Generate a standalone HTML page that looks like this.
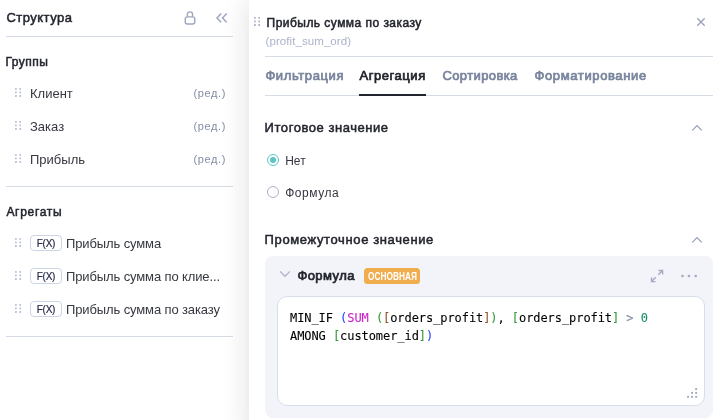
<!DOCTYPE html>
<html lang="ru">
<head>
<meta charset="utf-8">
<title>Структура</title>
<style>
  html, body { margin: 0; padding: 0; }
  body {
    width: 723px; height: 420px; overflow: hidden; position: relative;
    background: #ffffff;
    font-family: "Liberation Sans", sans-serif;
    color: #23252e;
    font-size: 13px;
  }
  #root { position: absolute; left: 0; top: 0; width: 723px; height: 420px; overflow: hidden; will-change: transform; }
  .abs { position: absolute; white-space: nowrap; }
  .t { position: absolute; white-space: nowrap; line-height: 16px; height: 16px; color: #363840; }
  .t.b { color: #23252e; }
  .t.b.grey { color: #78849d; }
  .t.muted { color: #838da6; }
  .b { font-weight: normal; -webkit-text-stroke: 0.5px currentColor; }
  .hr { position: absolute; height: 1px; background: #d5dce8; }
  .left { position: absolute; left: 0; top: 0; width: 249px; height: 420px; background: #fff; }
  .right {
    position: absolute; left: 249px; top: 0; width: 480px; height: 440px; background: #fff;
    box-shadow: 0 0 28px rgba(25, 25, 45, 0.145);
    border-top-left-radius: 2px;
  }
  .grey { color: #75819b; }
  .tab { -webkit-text-stroke-width: 0.7px; }
  .muted { color: #7f8aa3; }
  .dots { position: absolute; width: 6.2px; height: 9px; }
  .badge {
    position: absolute; box-sizing: border-box; width: 32px; height: 16px;
    border: 1px solid #ccd4e6; border-radius: 4px; background: #fff;
    font-size: 10px; line-height: 15px; text-align: center; color: #262c48; letter-spacing: -0.25px; -webkit-text-stroke: 0.2px #262c48;
  }
  .radio { position: absolute; box-sizing: border-box; width: 12.4px; height: 12.4px; border-radius: 50%; border: 1px solid #a9aec8; background: #fff; }
  .radio.on { border-color: #5cc6c4; }
  .radio.on::after { content: ""; position: absolute; left: 2px; top: 2px; width: 6.4px; height: 6.4px; border-radius: 50%; background: #5cc6c4; }
  .box { position: absolute; left: 265px; top: 256px; width: 448px; height: 162px; background: #f3f4f9; border-radius: 8px; }
  .ta { position: absolute; box-sizing: border-box; left: 277px; top: 296px; width: 427.6px; height: 110px; background: #fff; border: 1px solid #d8deea; border-radius: 10px; }
  .code { position: absolute; left: 290px; font-family: "DejaVu Sans Mono", "Liberation Mono", monospace; font-size: 12px; line-height: 18px; white-space: pre; color: #000; letter-spacing: -0.07px; -webkit-text-stroke: 0.1px currentColor; }
  .c1 { color: #2f45f7; } .c2 { color: #cc1fcc; } .c3 { color: #3a9a3a; } .c4 { color: #93532a; } .c5 { color: #8791a6; } .c6 { color: #1a8f6c; }
  .tag { position: absolute; box-sizing: border-box; left: 364px; top: 268px; width: 56px; height: 16px; background: #f0ad4e; border-radius: 3.5px; color: #fff; font-size: 10px; font-weight: bold; line-height: 16px; text-align: center; }
  .tag span { display: inline-block; transform: scaleX(0.83); transform-origin: 50% 50%; margin: 0 -6px; position: relative; top: 1.2px; }
</style>
</head>
<body>
<div id="root">
<div class="left">
  <div class="t b" style="left:6.4px; top:10px; font-size:13px; letter-spacing:0.49px;">Структура</div>
  <svg class="abs" style="left:183px; top:10px;" width="14" height="16" viewBox="0 0 14 16" fill="none" stroke="#9fa6be" stroke-width="1.4">
    <rect x="2.25" y="6.9" width="9.5" height="7.05" rx="2"/>
    <path d="M4.35 6.9V4.5a2.6 2.6 0 0 1 5.2 0V6.9"/>
  </svg>
  <svg class="abs" style="left:215px; top:12px;" width="14" height="12" viewBox="0 0 14 12" fill="none" stroke="#9fa6be" stroke-width="1.5">
    <path d="M6.2 1.6L2 5.9L6.2 10.2"/>
    <path d="M11.7 1.6L7.5 5.9L11.7 10.2"/>
  </svg>
  <div class="hr" style="left:6px; top:36px; width:227px;"></div>

  <div class="t b" style="left:5.6px; top:54px; font-size:12px; letter-spacing:0.44px;">Группы</div>

  <svg class="dots" style="left:15px; top:88px;" viewBox="0 0 6.2 9" fill="#b9bfd6"><rect x="0" y="0" width="1.8" height="1.8" rx="0.5"/><rect x="4.3" y="0" width="1.8" height="1.8" rx="0.5"/><rect x="0" y="3.55" width="1.8" height="1.8" rx="0.5"/><rect x="4.3" y="3.55" width="1.8" height="1.8" rx="0.5"/><rect x="0" y="7.1" width="1.8" height="1.8" rx="0.5"/><rect x="4.3" y="7.1" width="1.8" height="1.8" rx="0.5"/></svg>
  <div class="t" style="left:30px; top:86px;">Клиент</div>
  <div class="t muted" style="left:193.5px; top:85px; font-size:11px; letter-spacing:0.6px;">(ред.)</div>

  <svg class="dots" style="left:15px; top:121px;" viewBox="0 0 6.2 9" fill="#b9bfd6"><rect x="0" y="0" width="1.8" height="1.8" rx="0.5"/><rect x="4.3" y="0" width="1.8" height="1.8" rx="0.5"/><rect x="0" y="3.55" width="1.8" height="1.8" rx="0.5"/><rect x="4.3" y="3.55" width="1.8" height="1.8" rx="0.5"/><rect x="0" y="7.1" width="1.8" height="1.8" rx="0.5"/><rect x="4.3" y="7.1" width="1.8" height="1.8" rx="0.5"/></svg>
  <div class="t" style="left:30px; top:119px;">Заказ</div>
  <div class="t muted" style="left:193.5px; top:118px; font-size:11px; letter-spacing:0.6px;">(ред.)</div>

  <svg class="dots" style="left:15px; top:154px;" viewBox="0 0 6.2 9" fill="#b9bfd6"><rect x="0" y="0" width="1.8" height="1.8" rx="0.5"/><rect x="4.3" y="0" width="1.8" height="1.8" rx="0.5"/><rect x="0" y="3.55" width="1.8" height="1.8" rx="0.5"/><rect x="4.3" y="3.55" width="1.8" height="1.8" rx="0.5"/><rect x="0" y="7.1" width="1.8" height="1.8" rx="0.5"/><rect x="4.3" y="7.1" width="1.8" height="1.8" rx="0.5"/></svg>
  <div class="t" style="left:30px; top:152px;">Прибыль</div>
  <div class="t muted" style="left:193.5px; top:151px; font-size:11px; letter-spacing:0.6px;">(ред.)</div>

  <div class="hr" style="left:6px; top:186px; width:227px;"></div>

  <div class="t b" style="left:6.4px; top:204px; font-size:12px; letter-spacing:0.7px;">Агрегаты</div>

  <svg class="dots" style="left:15px; top:238px;" viewBox="0 0 6.2 9" fill="#b9bfd6"><rect x="0" y="0" width="1.8" height="1.8" rx="0.5"/><rect x="4.3" y="0" width="1.8" height="1.8" rx="0.5"/><rect x="0" y="3.55" width="1.8" height="1.8" rx="0.5"/><rect x="4.3" y="3.55" width="1.8" height="1.8" rx="0.5"/><rect x="0" y="7.1" width="1.8" height="1.8" rx="0.5"/><rect x="4.3" y="7.1" width="1.8" height="1.8" rx="0.5"/></svg>
  <div class="badge" style="left:30px; top:235px;">F(X)</div>
  <div class="t" style="left:66px; top:236px; letter-spacing:-0.12px;">Прибыль сумма</div>

  <svg class="dots" style="left:15px; top:271px;" viewBox="0 0 6.2 9" fill="#b9bfd6"><rect x="0" y="0" width="1.8" height="1.8" rx="0.5"/><rect x="4.3" y="0" width="1.8" height="1.8" rx="0.5"/><rect x="0" y="3.55" width="1.8" height="1.8" rx="0.5"/><rect x="4.3" y="3.55" width="1.8" height="1.8" rx="0.5"/><rect x="0" y="7.1" width="1.8" height="1.8" rx="0.5"/><rect x="4.3" y="7.1" width="1.8" height="1.8" rx="0.5"/></svg>
  <div class="badge" style="left:30px; top:268px;">F(X)</div>
  <div class="t" style="left:66px; top:269px; letter-spacing:-0.12px;">Прибыль сумма по клие...</div>

  <svg class="dots" style="left:15px; top:304px;" viewBox="0 0 6.2 9" fill="#b9bfd6"><rect x="0" y="0" width="1.8" height="1.8" rx="0.5"/><rect x="4.3" y="0" width="1.8" height="1.8" rx="0.5"/><rect x="0" y="3.55" width="1.8" height="1.8" rx="0.5"/><rect x="4.3" y="3.55" width="1.8" height="1.8" rx="0.5"/><rect x="0" y="7.1" width="1.8" height="1.8" rx="0.5"/><rect x="4.3" y="7.1" width="1.8" height="1.8" rx="0.5"/></svg>
  <div class="badge" style="left:30px; top:301px;">F(X)</div>
  <div class="t" style="left:66px; top:302px; letter-spacing:-0.12px;">Прибыль сумма по заказу</div>

  <div class="hr" style="left:6px; top:336px; width:227px;"></div>
</div>

<div class="right"></div>

<svg class="dots" style="left:254px; top:17px;" viewBox="0 0 6.2 9" fill="#a9b1c9"><rect x="0" y="0" width="1.8" height="1.8" rx="0.5"/><rect x="4.3" y="0" width="1.8" height="1.8" rx="0.5"/><rect x="0" y="3.55" width="1.8" height="1.8" rx="0.5"/><rect x="4.3" y="3.55" width="1.8" height="1.8" rx="0.5"/><rect x="0" y="7.1" width="1.8" height="1.8" rx="0.5"/><rect x="4.3" y="7.1" width="1.8" height="1.8" rx="0.5"/></svg>
<div class="t b" style="left:266.6px; top:15px; font-size:12px; letter-spacing:0.46px;">Прибыль сумма по заказу</div>
<div class="t" style="left:265.5px; top:33px; font-size:11.5px; letter-spacing:0.08px; color:#abb3cb;">(profit_sum_ord)</div>
<svg class="abs" style="left:696px; top:17px;" width="10" height="10" viewBox="0 0 10 10" fill="none" stroke="#98a1bc" stroke-width="1.3"><path d="M1.3 1.3L8.7 8.7M8.7 1.3L1.3 8.7"/></svg>
<div class="hr" style="left:265px; top:56px; width:448px;"></div>

<div class="t b tab grey" style="left:265.4px; top:68px; letter-spacing:0.6px;">Фильтрация</div>
<div class="t b tab" style="left:359.5px; top:68px; letter-spacing:0.55px;">Агрегация</div>
<div class="t b tab grey" style="left:442.4px; top:68px; letter-spacing:0.4px;">Сортировка</div>
<div class="t b tab grey" style="left:534.5px; top:68px; letter-spacing:0.62px;">Форматирование</div>
<div class="hr" style="left:265px; top:95px; width:448px;"></div>
<div class="abs" style="left:359px; top:94px; width:67px; height:2px; background:#23252e;"></div>

<div class="t b" style="left:264.6px; top:120px; letter-spacing:0.55px;">Итоговое значение</div>
<svg class="abs" style="left:690px; top:123px;" width="14" height="9" viewBox="0 0 14 9" fill="none" stroke="#98a1bc" stroke-width="1.3"><path d="M2.3 7.4L7 2.6L11.7 7.4"/></svg>

<div class="radio on" style="left:266.7px; top:153.8px;"></div>
<div class="t" style="left:285.2px; top:153px; font-size:12px;">Нет</div>
<div class="radio" style="left:266.7px; top:185.8px;"></div>
<div class="t" style="left:285.2px; top:185px; font-size:12px; letter-spacing:0.55px;">Формула</div>

<div class="t b" style="left:264.6px; top:232px; letter-spacing:0.62px;">Промежуточное значение</div>
<svg class="abs" style="left:690px; top:235px;" width="14" height="9" viewBox="0 0 14 9" fill="none" stroke="#98a1bc" stroke-width="1.3"><path d="M2.3 7.4L7 2.6L11.7 7.4"/></svg>

<div class="box"></div>
<svg class="abs" style="left:279px; top:270px;" width="12" height="8" viewBox="0 0 12 8" fill="none" stroke="#abb2c9" stroke-width="1.3"><path d="M1.1 1.4L6 6.3L10.9 1.4"/></svg>
<div class="t b tab" style="left:297.4px; top:268px; letter-spacing:0.42px;">Формула</div>
<div class="tag"><span>ОСНОВНАЯ</span></div>
<svg class="abs" style="left:650px; top:269px;" width="14" height="14" viewBox="0 0 14 14" fill="none" stroke="#a3abc3" stroke-width="1.4"><path d="M8.6 1.5H12.6V5.5M12.6 1.5L8.3 5.8M5.5 12.6H1.5V8.6M1.5 12.6L5.8 8.3"/></svg>
<svg class="abs" style="left:680px; top:273px;" width="18" height="6" viewBox="0 0 18 6" fill="#a3abc3"><circle cx="2.5" cy="3" r="1.35"/><circle cx="9" cy="3" r="1.35"/><circle cx="15.7" cy="3" r="1.35"/></svg>

<div class="ta"></div>
<div class="code" style="top:309px;">MIN_IF <span class="c1">(</span><span class="c2">SUM</span> <span class="c3">(</span><span class="c4">[</span>orders_profit<span class="c4">]</span><span class="c3">)</span>, <span class="c3">[</span>orders_profit<span class="c3">]</span> <span class="c5">&gt;</span> <span class="c6">0</span></div>
<div class="code" style="top:327px;">AMONG <span class="c3">[</span>customer_id<span class="c3">]</span><span class="c1">)</span></div>
<svg class="abs" style="left:687px; top:388px;" width="11" height="10" viewBox="0 0 11 10" fill="#a3a9c1"><rect x="8.2" y="0.1" width="1.9" height="1.9"/><rect x="4.1" y="3.9" width="1.9" height="1.9"/><rect x="8.2" y="3.9" width="1.9" height="1.9"/><rect x="0.1" y="7.9" width="1.9" height="1.9"/><rect x="4.1" y="7.9" width="1.9" height="1.9"/><rect x="8.2" y="7.9" width="1.9" height="1.9"/></svg>
</div>
</body>
</html>
